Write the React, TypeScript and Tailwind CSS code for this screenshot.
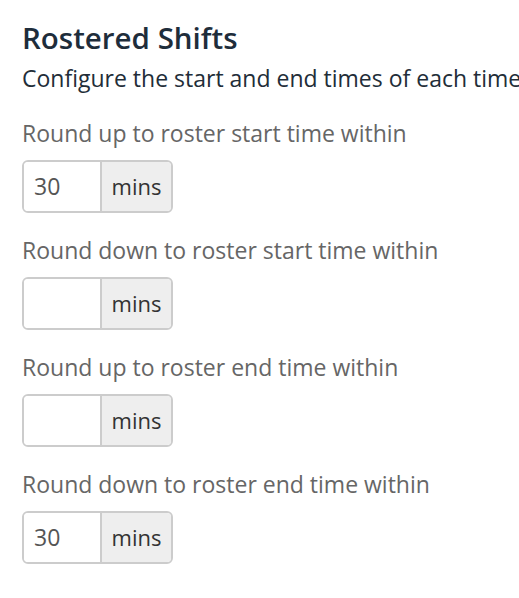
import React from 'react';

interface RoundingFieldProps {
    label: string;
    value: string;
}

const RoundingField: React.FC<RoundingFieldProps> = ({ label, value }) => {
    return (
        <div className="flex flex-col">
            <label className="text-[23px] leading-[30px] text-[#666666]">{label}</label>
            <div className="mt-[12px] flex h-[53px] w-[151px] rounded-[6px] border-2 border-[#cccccc] overflow-hidden">
                <input
                    type="text"
                    defaultValue={value}
                    className="w-[76px] px-[10px] text-[23px] text-[#555555] bg-white outline-none"
                />
                <span className="flex flex-1 items-center justify-center border-l-2 border-[#cccccc] bg-[#eeeeee] text-[22px] text-[#333333]">
                    mins
                </span>
            </div>
        </div>
    );
};

const fields = [
    { label: 'Round up to roster start time within', value: '30' },
    { label: 'Round down to roster start time within', value: '' },
    { label: 'Round up to roster end time within', value: '' },
    { label: 'Round down to roster end time within', value: '30' },
];

export default function App() {
    return (
        <div className="w-[519px] h-[598px] overflow-hidden bg-white pl-[22px] pt-[18px] font-['Open_Sans',sans-serif] whitespace-nowrap">
            <h2 className="text-[29.5px] leading-[40px] font-semibold text-[#1e2d3b]">Rostered Shifts</h2>
            <p className="mt-[5px] text-[23px] leading-[30px] text-[#222d38]">
                Configure the start and end times of each timesheet
            </p>
            <div className="mt-[25px] flex flex-col gap-[22px]">
                {fields.map((f) => (
                    <RoundingField key={f.label} label={f.label} value={f.value} />
                ))}
            </div>
        </div>
    );
}
